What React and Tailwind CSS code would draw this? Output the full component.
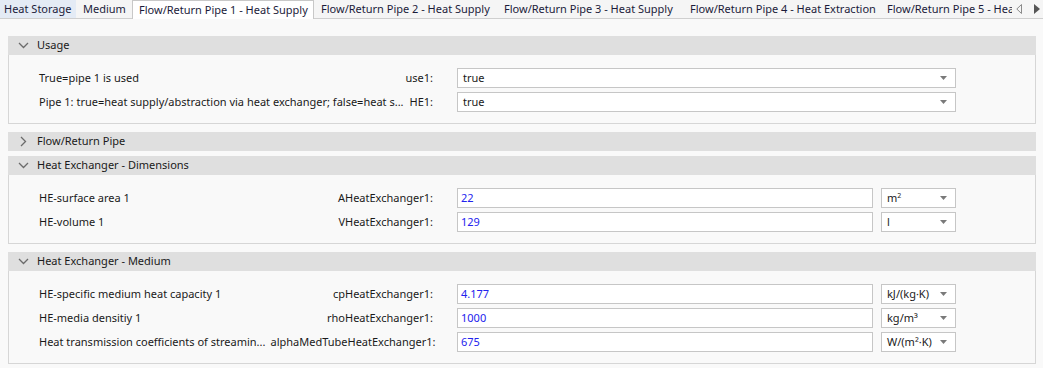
import React from "react";

const font = { fontFamily: '"Noto Sans", "Open Sans", sans-serif' };

const ChevronDown = () => (
  <svg width="11" height="7" viewBox="0 0 11 7" className="shrink-0">
    <path d="M1 1 L5.5 5.5 L10 1" fill="none" stroke="#6b6b6b" strokeWidth="1.3" />
  </svg>
);

const ChevronRight = () => (
  <svg width="7" height="11" viewBox="0 0 7 11" className="shrink-0">
    <path d="M1 1 L5.5 5.5 L1 10" fill="none" stroke="#6b6b6b" strokeWidth="1.3" />
  </svg>
);

const Caret = () => (
  <svg width="7" height="4" viewBox="0 0 7 4" className="shrink-0">
    <path d="M0 0 H7 L3.5 4 Z" fill="#7a7a7a" />
  </svg>
);

const Tabs = () => (
  <div className="flex h-[19px] border-b border-[#cfcfcf] bg-[#f5f5f5] text-[11px] text-[#1b1b3a] leading-[18px]">
    <div className="w-[76px] shrink-0 pl-[4px] bg-[#e4ebf5] whitespace-nowrap">Heat Storage</div>
    <div className="w-[56px] shrink-0 pl-[7px] whitespace-nowrap">Medium</div>
    <div className="w-[182px] shrink-0 pl-[6px] bg-white border-x border-t border-[#c8c8c8] h-[19px] whitespace-nowrap">
      Flow/Return Pipe 1 - Heat Supply
    </div>
    <div className="w-[183px] shrink-0 pl-[7px] whitespace-nowrap">Flow/Return Pipe 2 - Heat Supply</div>
    <div className="w-[186px] shrink-0 pl-[7px] whitespace-nowrap">Flow/Return Pipe 3 - Heat Supply</div>
    <div className="w-[197px] shrink-0 pl-[7px] whitespace-nowrap">Flow/Return Pipe 4 - Heat Extraction</div>
    <div className="flex-1 min-w-0 pl-[7px] overflow-hidden whitespace-nowrap">Flow/Return Pipe 5 - Heat Supply</div>
    <div className="w-[31px] shrink-0 flex items-center gap-[12px] pl-[4px]">
      <svg width="6" height="10" viewBox="0 0 6 10">
        <path d="M5.5 0.5 L0.8 5 L5.5 9.5 Z" fill="none" stroke="#8a8a8a" strokeWidth="1" />
      </svg>
      <svg width="6" height="10" viewBox="0 0 6 10">
        <path d="M0 0 L6 5 L0 10 Z" fill="#555" />
      </svg>
    </div>
  </div>
);

const Header = ({ title, open }) => (
  <div className="h-[19px] bg-[#dfdfdf] flex items-center text-[11px] text-[#1a1a1a]">
    <div className="w-[29px] flex justify-center pl-[2px]">{open ? <ChevronDown /> : <ChevronRight />}</div>
    <span>{title}</span>
  </div>
);

const Row = ({ label, keyName, value, unit, select, blue }) => (
  <div className="flex items-center h-5 text-[11px]">
    <div className="w-[424px] shrink-0 flex justify-between gap-[5px] pl-[30px] whitespace-nowrap text-[#1a1a1a]">
      <span>{label}</span>
      <span>{keyName}</span>
    </div>
    <div className="w-[24px] shrink-0" />
    {select ? (
      <div className="w-[499px] h-5 bg-white border border-[#c6c6c6] flex items-center justify-between pl-[5px] pr-[8px]">
        <span className="text-[#1a1a1a]">{value}</span>
        <Caret />
      </div>
    ) : (
      <>
        <div className="w-[416px] h-5 bg-white border border-[#c6c6c6] flex items-center pl-[3px]">
          <span className={blue ? "text-[#2222ee]" : "text-[#1a1a1a]"}>{value}</span>
        </div>
        <div className="w-[75px] ml-[8px] h-5 bg-white border border-[#c6c6c6] flex items-center justify-between pl-[5px] pr-[8px]">
          <span className="text-[#1a1a1a]">{unit}</span>
          <Caret />
        </div>
      </>
    )}
  </div>
);

const Section = ({ title, children, open = true }) => (
  <div className={open ? "mb-[8px]" : "mb-[5px]"}>
    <Header title={title} open={open} />
    {open && (
      <div className="border border-t-0 border-[#d6d6d6] bg-[#f9f9f9] pt-[13px] pb-[11px] flex flex-col gap-[4px]">
        {children}
      </div>
    )}
  </div>
);

export default function App() {
  return (
    <div style={font} className="w-[1043px] h-[368px] bg-[#f9f9f9] overflow-hidden">
      <Tabs />
      <div className="pt-[17px] pl-[8px] pr-[7px]">
        <Section title="Usage">
          <Row label="True=pipe 1 is used" keyName="use1:" value="true" select />
          <Row
            label="Pipe 1: true=heat supply/abstraction via heat exchanger; false=heat s..."
            keyName="HE1:"
            value="true"
            select
          />
        </Section>
        <Section title="Flow/Return Pipe" open={false} />
        <Section title="Heat Exchanger - Dimensions">
          <Row label="HE-surface area 1" keyName="AHeatExchanger1:" value="22" unit={<>m<sup className="text-[7px]">2</sup></>} blue />
          <Row label="HE-volume 1" keyName="VHeatExchanger1:" value="129" unit="l" blue />
        </Section>
        <Section title="Heat Exchanger - Medium">
          <Row label="HE-specific medium heat capacity 1" keyName="cpHeatExchanger1:" value="4.177" unit="kJ/(kg·K)" blue />
          <Row label="HE-media densitiy 1" keyName="rhoHeatExchanger1:" value="1000" unit="kg/m³" blue />
          <Row
            label="Heat transmission coefficients of streamin..."
            keyName="alphaMedTubeHeatExchanger1:"
            value="675"
            unit="W/(m²·K)"
            blue
          />
        </Section>
      </div>
    </div>
  );
}
